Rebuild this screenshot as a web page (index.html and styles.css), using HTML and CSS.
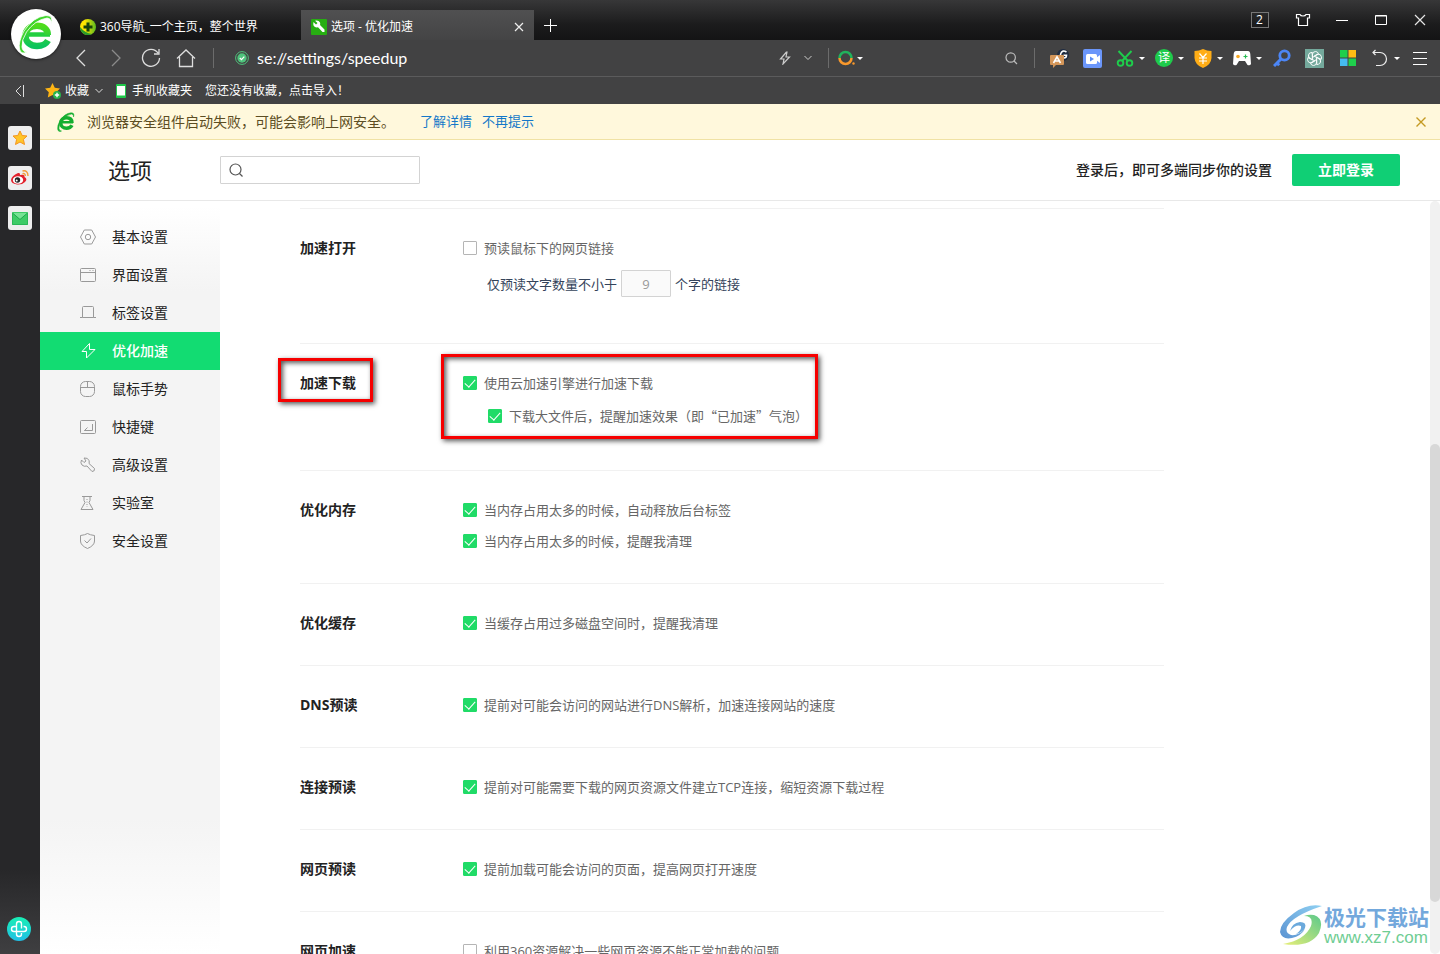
FILE: index.html
```html
<!DOCTYPE html>
<html lang="zh-CN">
<head>
<meta charset="utf-8">
<title>选项 - 优化加速</title>
<link rel="stylesheet" href="styles.css">
</head>
<body>
<div class="browser">
  <header class="chrome">
    <div class="logo">
      <svg width="36" height="40" viewBox="0 0 36 40" fill="none">
        <defs><linearGradient id="eg" x1="0" y1="0" x2="0" y2="1"><stop offset="0" stop-color="#4fdc1c"/><stop offset="1" stop-color="#0cc45c"/></linearGradient></defs>
        <path d="M8 20.500H32" stroke="#22cf40" stroke-width="4.500"/>
        <path d="M29.800 21C30 15 25.500 11.800 19 11.800C12 11.800 7.500 16 7.500 22C7.500 28 12.500 32 19 32C24.500 32 28 30 30 26.500" stroke="url(#eg)" stroke-width="6.500"/>
        <path d="M33 10Q34 4.500 29 4Q17 6 8.500 18Q3.500 26 4 33Q4.500 38 9 38Q3 41 1.500 35Q0 28 6 17Q15 3 28 1.500Q36 1.500 33 10Z" fill="#3fd52c" stroke="#fff" stroke-width=".8"/>
      </svg>
    </div>
    <div class="tabs">
      <a class="tab" href="#nav">
        <svg width="16" height="16" viewBox="0 0 16 16"><defs><linearGradient id="yg"><stop offset=".3" stop-color="#ffe600"/><stop offset="1" stop-color="#58b820"/></linearGradient></defs><circle cx="8" cy="8" r="8" fill="url(#yg)"/><path d="M0 8A8 8 0 0 0 12 15Q5 14 0 8Z" fill="#2b9d2a"/><path d="M8 3.500V12.500M3.500 8H12.500" stroke="#17410c" stroke-width="3"/></svg>
        <span>360导航_一个主页，整个世界</span>
      </a>
      <div class="tab tab-active">
        <svg width="16" height="16" viewBox="0 0 16 16"><rect width="16" height="16" rx="1" fill="#27ae12"/><path d="M2.500 3L5 5.500L6.500 4L4 1.700Q7.500 .7 9 3.500Q9.500 5 9 6L13.500 10.500V13H11.500L7 8.300Q4 9 2.500 6.500Q2 5 2.500 3Z" fill="#fff"/></svg>
        <span class="tab-text">选项 - 优化加速</span>
        <button class="tab-close" aria-label="关闭标签"><svg width="10" height="10" viewBox="0 0 10 10" fill="none" stroke="#eee" stroke-width="1.200"><path d="M1 1L9 9M9 1L1 9"/></svg></button>
      </div>
      <button class="tab-new" aria-label="新建标签"><svg width="14" height="14" viewBox="0 0 14 14" stroke="#fff"><path d="M7.500 1V14M1 7.500H14"/></svg></button>
      <div class="window-controls">
        <button class="count-btn"><span class="count">2</span></button>
        <button aria-label="皮肤"><svg width="16" height="14" viewBox="0 0 16 14" fill="none" stroke="#fff" stroke-width="1.200"><path d="M1.500 1.500H5Q5.500 3 8 3T11 1.500H14.500V5H12.500V12.500H3.500V5H1.500Z"/></svg></button>
        <button aria-label="最小化"><svg width="12" height="12" viewBox="0 0 12 12" stroke="#fff"><path d="M0 6.500H12"/></svg></button>
        <button aria-label="最大化"><svg width="12" height="12" viewBox="0 0 12 12" fill="none" stroke="#fff"><path d="M.5 1.500H11.500V10.500H.5ZM.5 2H11.500"/></svg></button>
        <button aria-label="关闭"><svg width="12" height="12" viewBox="0 0 12 12" stroke="#e5e5e5" stroke-width="1.200"><path d="M1 1L11 11M11 1L1 11"/></svg></button>
      </div>
    </div>
    <div class="toolbar">
      <nav class="nav-buttons">
        <button aria-label="后退"><svg width="12" height="18" viewBox="0 0 12 18" fill="none" stroke="#ddd" stroke-width="1.300"><path d="M10 1L2 9L10 17"/></svg></button>
        <button aria-label="前进"><svg width="12" height="18" viewBox="0 0 12 18" fill="none" stroke="#8b8b8b" stroke-width="1.300"><path d="M2 1L10 9L2 17"/></svg></button>
        <button aria-label="刷新"><svg width="20" height="20" viewBox="0 0 20 20" fill="none" stroke="#ddd" stroke-width="1.300"><path d="M17 5A8.500 8.500 0 1 0 18.500 10M18 1V6H13"/></svg></button>
        <button aria-label="主页"><svg width="20" height="20" viewBox="0 0 20 20" fill="none" stroke="#ddd" stroke-width="1.300"><path d="M1 10.500L10 2L19 10.500M3.500 9V18.500H16.500V9"/></svg></button>
      </nav>
      <div class="address">
        <svg width="14" height="14" viewBox="0 0 14 14" fill="none"><circle cx="7" cy="7" r="6.400" stroke="#4fc37c"/><circle cx="7" cy="7" r="4.700" fill="#4fc37c"/><path d="M4.800 7L6.500 8.600L9.300 5.600" stroke="#fff" stroke-width="1.200"/></svg>
        <input class="url" aria-label="地址" value="se://settings/speedup">
        <button aria-label="极速模式"><svg width="12" height="14" viewBox="0 0 12 14" fill="none" stroke="#ccc" stroke-width="1.200"><path d="M7.500 1L1.500 8H5L4 13L10.500 6H7L8 1Z"/></svg></button>
        <button aria-label="展开地址"><svg width="8" height="6" viewBox="0 0 8 6" fill="none" stroke="#ccc"><path d="M.5 1L4 4.500L7.500 1"/></svg></button>
      </div>
      <div class="search">
        <button class="engine" aria-label="搜索引擎"><svg width="17" height="16" viewBox="0 0 17 16" fill="none" stroke-width="2.500"><path d="M1.500 8A6 6 0 0 1 13.500 8" stroke="#20b15c"/><path d="M1.500 8A6 6 0 0 0 13.500 8" stroke="#f8982c"/><circle cx="15.500" cy="13.500" r="1.200" fill="#f8982c"/></svg><i class="caret"></i></button>
        <input class="search-input" aria-label="搜索">
        <button aria-label="搜索按钮"><svg width="13" height="13" viewBox="0 0 13 13" fill="none" stroke="#bbb" stroke-width="1.200"><circle cx="5.700" cy="5.500" r="4.700"/><path d="M9 9L12 12"/></svg></button>
      </div>
      <div class="tools">
        <button aria-label="翻译助手"><svg width="19" height="19" viewBox="0 0 19 19"><circle cx="13" cy="6" r="6" fill="#1f2c42"/><path d="M16.500 3Q12.500 .5 10.800 4.500T14 9Q16.500 9 16.500 6.200H13.500" fill="none" stroke="#fff" stroke-width="1.600"/><path d="M1 6H13Q14 6 14 7V15Q14 16 13 16H6L3 19V16H1Q0 16 0 15V7Q0 6 1 6Z" fill="#d49659"/><path d="M3.500 14L7 7.800L10.500 14M5 12H9" fill="none" stroke="#fff" stroke-width="1.600"/></svg></button>
        <button aria-label="录屏"><svg width="19" height="19" viewBox="0 0 19 19"><rect width="19" height="19" rx="2" fill="#6b96fa"/><rect x="3" y="5" width="11" height="10" rx="1.500" fill="#fff"/><path d="M13 9L17 6V14L13 11Z" fill="#fff"/><path d="M7 7.500L11 10L7 12.500Z" fill="#5b8ef5"/></svg></button>
        <button class="drop" aria-label="截图"><svg width="18" height="18" viewBox="0 0 18 18" fill="none" stroke="#1ecd4c" stroke-width="1.900"><circle cx="4.500" cy="14" r="2.800"/><circle cx="13.500" cy="14" r="2.800"/><path d="M2.500 2L11.500 11.500M15.500 2L6.500 11.500"/></svg><i class="caret"></i></button>
        <button class="drop" aria-label="翻译"><span class="translate">译</span><i class="caret"></i></button>
        <button class="drop" aria-label="网银"><svg width="18" height="19" viewBox="0 0 18 19"><path d="M9 0Q13 2 17.500 2V9Q17 16 9 19Q1 16 .5 9V2Q5 2 9 0Z" fill="#ffad16"/><path d="M5.500 4.500L9 8.500L12.500 4.500M5 9H13M5 12H13M9 8.500V15" fill="none" stroke="#fff" stroke-width="1.200"/></svg><i class="caret"></i></button>
        <button class="drop" aria-label="游戏"><svg width="18" height="16" viewBox="0 0 18 16"><path d="M3 1H15Q17 1 17.300 4L18 14Q17 16 14.500 15L12 11H6L3.500 15Q1 16 0 14L.7 4Q1 1 3 1Z" fill="#fff"/><circle cx="5" cy="6.500" r="1.800" fill="#f7a823"/><path d="M12.500 4.500V8.500M10.500 6.500H14.500" stroke="#28bc53" stroke-width="1.200"/></svg><i class="caret"></i></button>
        <button aria-label="密码"><svg width="18" height="18" viewBox="0 0 18 18" fill="none" stroke="#4c86f6"><circle cx="11.500" cy="6.500" r="4.700" stroke-width="2.800"/><path d="M8 10L1 17M4 14L6.200 16.200" stroke-width="3"/></svg></button>
        <button aria-label="智能助手"><svg width="19" height="19" viewBox="0 0 19 19" fill="none"><rect width="19" height="19" fill="#74a99c"/><g stroke="#fff" stroke-width=".9"><path id="petal" d="M7.500 10.500V5Q8 2.500 10.500 2.500Q12.500 2.500 13.500 4.500L9 7.200"/><use href="#petal" transform="rotate(60 9.500 9.500)"/><use href="#petal" transform="rotate(120 9.500 9.500)"/><use href="#petal" transform="rotate(180 9.500 9.500)"/><use href="#petal" transform="rotate(240 9.500 9.500)"/><use href="#petal" transform="rotate(300 9.500 9.500)"/></g></svg></button>
        <button aria-label="应用"><svg width="16" height="16" viewBox="0 0 16 16"><rect width="7.500" height="7.500" fill="#1fcf4c"/><rect x="8.500" width="7.500" height="7.500" fill="#ffbd14"/><rect y="8.500" width="7.500" height="7.500" fill="#45bbf0"/><rect x="8.500" y="8.500" width="7.500" height="7.500" fill="#1fcf4c"/></svg></button>
        <button class="drop" aria-label="恢复"><svg width="18" height="18" viewBox="0 0 18 18" fill="none" stroke="#eee" stroke-width="1.200"><path d="M2 3.500H9A6.500 6.500 0 0 1 9 16.500H5M4.500 1L2 3.500L4.500 6"/></svg><i class="caret"></i></button>
        <button aria-label="菜单"><svg width="14" height="14" viewBox="0 0 14 14" stroke="#fff"><path d="M0 1.500H14M0 7.500H14M0 13.500H14"/></svg></button>
      </div>
    </div>
    <div class="bookmarks">
      <button class="bm-collapse" aria-label="收起"><svg width="10" height="12" viewBox="0 0 10 12" fill="none" stroke="#ddd"><path d="M6 1L1 6L6 11M8.500 0V12"/></svg></button>
      <button class="bm-fav"><svg width="16" height="16" viewBox="0 0 16 16"><path d="M7.500 0L9.800 4.800L15 5.400L11.200 9.200L12.200 14.500L7.500 12L2.800 14.500L3.800 9.200L0 5.400L5.200 4.800Z" fill="#fdb515"/><circle cx="12" cy="12" r="4" fill="#27b24b"/><path d="M12 9.800V14.200M9.800 12H14.200" stroke="#fff" stroke-width="1.400"/></svg>收藏<svg class="chev" width="8" height="6" viewBox="0 0 8 6" fill="none" stroke="#ddd"><path d="M.5 1L4 4.500L7.500 1"/></svg></button>
      <a href="#mobile"><svg width="10" height="14" viewBox="0 0 10 14"><rect width="10" height="14" rx="1" fill="#20c94a"/><rect x="1" y="2" width="8" height="9.500" fill="#fff"/></svg>手机收藏夹</a>
      <a href="#import">您还没有收藏，点击导入！</a>
    </div>
  </header>

  <div class="body">
    <aside class="rail">
      <button class="rail-box" aria-label="收藏夹"><svg width="16" height="16" viewBox="0 0 16 16"><path d="M8 1L10.200 5.500L15 6L11.400 9.400L12.500 14.500L8 12L3.500 14.500L4.600 9.400L1 6L5.800 5.500Z" fill="#ffc529" stroke="#f5941f"/></svg></button>
      <button class="rail-box" aria-label="微博"><svg width="20" height="18" viewBox="0 0 20 18" fill="none"><path d="M8 4Q10.500 3.500 10 6Q15 5 14.500 8Q18 10 15 13Q12 16 7 15.500Q1 14.500 1 11Q1.500 7 8 4Z" fill="#e2222c"/><ellipse cx="8" cy="11" rx="5.200" ry="3.800" fill="#fff"/><circle cx="7.500" cy="11" r="2.700" fill="#222"/><circle cx="6.700" cy="11.600" r="1" fill="#fff"/><path d="M12.500 2Q18 .8 18 7M12.500 4.700Q15.500 4 15.300 7" stroke="#f29b38" stroke-width="1.400"/></svg></button>
      <button class="rail-box" aria-label="邮箱"><svg width="16" height="13" viewBox="0 0 16 13"><rect width="16" height="13" rx="1" fill="#3ecb67"/><path d="M.5 1L8 7.500L15.500 1" fill="#76e294" stroke="#1ca84b"/><path d="M.5 1V12.500H15.500V1" fill="none" stroke="#2bb757"/></svg></button>
      <button class="rail-health" aria-label="健康"><svg width="24" height="24" viewBox="0 0 24 24" fill="none"><defs><linearGradient id="hg" x1="0" y1="0" x2="0" y2="1"><stop offset="0" stop-color="#19efb4"/><stop offset="1" stop-color="#20bfe6"/></linearGradient></defs><circle cx="12" cy="12" r="12" fill="url(#hg)"/><path d="M14.500 11.500V7A2.500 2.500 0 0 0 9.500 7V17A2.500 2.500 0 0 0 14.500 17V16M9.500 9.500H7A2.500 2.500 0 0 0 7 14.500H17A2.500 2.500 0 0 0 17 9.500H16.500" stroke="#fff" stroke-width="1.400"/></svg></button>
    </aside>

    <div class="page">
      <div class="notice">
        <svg width="18" height="20" viewBox="0 0 36 40" fill="none"><path d="M8 20.500H32" stroke="#14ae30" stroke-width="5"/><path d="M30 22C30 15 25.500 11.500 19 11.500C12 11.500 7.500 16 7.500 22C7.500 28 12.500 32.500 19 32.500C24.500 32.500 28 30 30 26.500" stroke="#14ae30" stroke-width="7"/><path d="M33 10Q34 4.500 29 4Q17 6 8.500 18Q3.500 26 4 33Q4.500 38 9 38Q3 41 1.500 35Q0 28 6 17Q15 3 28 1.500Q36 1.500 33 10Z" fill="#14ae30" stroke="#14ae30"/></svg>
        <span class="notice-text">浏览器安全组件启动失败，可能会影响上网安全。</span>
        <a href="#detail">了解详情</a>
        <a href="#dismiss">不再提示</a>
        <button class="notice-close" aria-label="关闭提示"><svg width="10" height="10" viewBox="0 0 10 10" stroke="#c49a22" stroke-width="1.400"><path d="M.5 .5L9.500 9.500M9.500 .5L.5 9.500"/></svg></button>
      </div>
      <div class="page-head">
        <h1>选项</h1>
        <label class="find"><svg width="14" height="14" viewBox="0 0 14 14" fill="none" stroke="#555" stroke-width="1.200"><circle cx="6.500" cy="6.500" r="5.500"/><path d="M10.500 10.500L13.500 13.500"/></svg><input aria-label="搜索设置"></label>
        <span class="login-tip">登录后，即可多端同步你的设置</span>
        <button class="login">立即登录</button>
      </div>
      <div class="columns">
        <nav class="menu">
          <a href="#basic"><svg viewBox="0 0 16 16"><path d="M4.300 1H11.700L15.500 8L11.700 15H4.300L.5 8Z"/><circle cx="8" cy="8" r="2.700"/></svg>基本设置</a>
          <a href="#ui"><svg viewBox="0 0 16 16"><rect x=".5" y="1.500" width="15" height="13" rx="1"/><path d="M.5 5.500H15.500M9.500 3.500H10.500M12.500 3.500H13.500"/></svg>界面设置</a>
          <a href="#tabs"><svg viewBox="0 0 16 16"><path d="M0 12.500H2.500V2.500Q2.500 1.500 3.500 1.500H12.500Q13.500 1.500 13.500 2.500V12.500H16M2.500 12.500H13.500"/></svg>标签设置</a>
          <a class="current" href="#speed"><svg viewBox="0 0 16 16"><path d="M9.500 .5L2 8.500H6.500V15L15 6.500H9.500Z"/></svg>优化加速</a>
          <a href="#mouse"><svg viewBox="0 0 16 16"><rect x=".5" y=".5" width="14" height="15" rx="5"/><path d="M.5 6.500H14.500M7.500 .5V6.500"/></svg>鼠标手势</a>
          <a href="#keys"><svg viewBox="0 0 16 16"><rect x=".5" y="1.500" width="15" height="13" rx="1"/><path d="M12.500 5V11.500H4.500L7.500 8.500M4.500 11.500H7.500"/></svg>快捷键</a>
          <a href="#advanced"><svg viewBox="0 0 16 16"><path d="M1.500 3L4 5.500L6 4L4 1Q8 .5 9 3.500Q9.500 5 9 6.500L14.500 11.500Q15 14.500 12 14.500L7 9Q4 10 2 8Q0 6 1.500 3Z"/></svg>高级设置</a>
          <a href="#lab"><svg viewBox="0 0 16 16"><path d="M2 1.500H12M4 1.500V5.500L5 7.500L1 14.500H13L9 7.500L10 5.500V1.500"/><path d="M7 4V12" stroke-dasharray="1 1.500"/></svg>实验室</a>
          <a href="#security"><svg viewBox="0 0 16 16"><path d="M7.500 .5Q10 2 14.500 2.500V8Q14.500 12.500 7.500 15.500Q.5 12.500 .5 8V2.500Q5 2 7.500 .5ZM4.500 7.500L7 10L11 5.500"/></svg>安全设置</a>
        </nav>
        <main class="settings">
          <section class="row row-open">
            <h2>加速打开</h2>
            <div class="options">
              <label class="option"><input type="checkbox">预读鼠标下的网页链接</label>
              <label class="amount">仅预读文字数量不小于<input type="text" value="9">个字的链接</label>
            </div>
          </section>
          <section class="row row-download">
            <h2>加速下载</h2>
            <div class="options">
              <label class="option"><input type="checkbox" checked>使用云加速引擎进行加速下载</label>
              <label class="option nested"><input type="checkbox" checked>下载大文件后，提醒加速效果（即“已加速”气泡）</label>
            </div>
            <div class="mark mark-title"></div>
            <div class="mark mark-options"></div>
          </section>
          <section class="row">
            <h2>优化内存</h2>
            <div class="options">
              <label class="option"><input type="checkbox" checked>当内存占用太多的时候，自动释放后台标签</label>
              <label class="option"><input type="checkbox" checked>当内存占用太多的时候，提醒我清理</label>
            </div>
          </section>
          <section class="row">
            <h2>优化缓存</h2>
            <div class="options"><label class="option"><input type="checkbox" checked>当缓存占用过多磁盘空间时，提醒我清理</label></div>
          </section>
          <section class="row">
            <h2>DNS预读</h2>
            <div class="options"><label class="option"><input type="checkbox" checked>提前对可能会访问的网站进行DNS解析，加速连接网站的速度</label></div>
          </section>
          <section class="row">
            <h2>连接预读</h2>
            <div class="options"><label class="option"><input type="checkbox" checked>提前对可能需要下载的网页资源文件建立TCP连接，缩短资源下载过程</label></div>
          </section>
          <section class="row">
            <h2>网页预读</h2>
            <div class="options"><label class="option"><input type="checkbox" checked>提前加载可能会访问的页面，提高网页打开速度</label></div>
          </section>
          <section class="row">
            <h2>网页加速</h2>
            <div class="options"><label class="option"><input type="checkbox">利用360资源解决一些网页资源不能正常加载的问题</label></div>
          </section>
        </main>
        <div class="scrollbar"><div class="thumb"></div></div>
      </div>
    </div>
  </div>
  <div class="watermark">
    <svg width="44" height="42" viewBox="0 0 44 42"><defs><linearGradient id="wb" x1="1" y1="0" x2="0" y2="1"><stop offset="0" stop-color="#8fd0f2"/><stop offset="1" stop-color="#5b93d2"/></linearGradient><linearGradient id="wg" x1="0" y1="1" x2="1" y2="0"><stop offset="0" stop-color="#e8ee78"/><stop offset="1" stop-color="#5cc98a"/></linearGradient></defs><path d="M42 2Q28 -1 14 9Q0 19 0 28Q2 36 12 34Q21 32 25 25Q18 32 11 31Q5 29 7 23Q12 12 42 2Z" fill="url(#wb)"/><path d="M10 27Q12 19 20 18Q27 18 25 24Q23 28 16 30Q22 26 21 22Q16 20 10 27Z" fill="#6ba9dc"/><path d="M24 12Q34 12 31 22Q25 36 3 40Q30 44 39 29Q45 15 34 11Q29 10 24 12Z" fill="url(#wg)"/></svg>
    <div class="watermark-text"><span class="wm-name">极光下载站</span><span class="wm-url">www.xz7.com</span></div>
  </div>
</div>
</body>
</html>
```

FILE: styles.css
```css
* { box-sizing: border-box; }
body { margin: 0; background: #fff; color: #222; font: 13px/20px "Open Sans", "Noto Sans CJK SC", sans-serif; }
button, input { font: inherit; color: inherit; }
button { border: 0; padding: 0; background: none; display: flex; align-items: center; justify-content: center; }
input { border: 0; padding: 0; background: none; min-width: 0; outline: 0; }
a { color: inherit; text-decoration: none; }
svg { flex: none; display: block; }
h1, h2 { margin: 0; }

.browser { position: relative; height: 100vh; display: flex; flex-direction: column; overflow: hidden; }
.chrome { flex: none; position: relative; color: #fff; background: #424243; font-size: 12px; }
.logo { position: absolute; left: 11px; top: 9px; width: 50px; height: 50px; border-radius: 50%; background: #fff; display: flex; align-items: center; justify-content: center; box-shadow: 0 1px 3px #0008; z-index: 1; }

.tabs { height: 40px; padding-left: 70px; display: flex; align-items: flex-end; background: linear-gradient(#373738, #1c1c1d 60%, #141415); }
.tab { width: 231px; height: 30px; padding: 3px 10px 0; display: flex; align-items: center; gap: 4px; }
.tab-active { width: 233px; background: linear-gradient(#505051, #444445); }
.tab-text { flex: 1; }
.tab-close { width: 10px; height: 20px; }
.tab-new { width: 32px; height: 30px; }
.window-controls { display: flex; margin-left: auto; padding-right: 1px; align-self: stretch; }
.window-controls button { width: 39px; }
.window-controls .count-btn { width: 47px; }
.count { width: 18px; height: 16px; border: 1px solid #777; line-height: 14px; }

.toolbar { height: 36px; display: flex; align-items: center; }
.nav-buttons { display: flex; padding-left: 63px; margin-right: 10px; }
.nav-buttons button { width: 35px; height: 30px; }
.address { flex: 1; display: flex; align-items: center; height: 20px; border-left: 1px solid #6c6c6c; padding: 0 9px 0 21px; }
.url { flex: 1; margin: 0 8px; font: 16px/20px Lato, sans-serif; }
.address button { width: 23px; height: 20px; }
.search { width: 207px; height: 20px; display: flex; align-items: center; border: solid #6c6c6c; border-width: 0 1px; padding: 0 16px 0 9px; }
.search-input { flex: 1; }
.engine { gap: 2px; }
.tools { display: flex; padding: 0 4px 0 8px; }
.tools button { width: 33px; height: 30px; }
.tools .drop { width: 39px; gap: 5px; padding-left: 4px; }
.caret { border: solid transparent; border-width: 3px 3px 0; border-top-color: #fff; }
.translate { width: 18px; height: 18px; border-radius: 50%; background: #1fcb4c; line-height: 17px; font-size: 12px; text-align: center; }

.bookmarks { height: 28px; border-top: 1px solid #5b5b5c; display: flex; align-items: center; gap: 13px; padding-left: 15px; }
.bookmarks a { display: flex; align-items: center; gap: 6px; }
.bm-collapse { width: 10px; margin-right: 7px; }
.bm-fav { gap: 4px; }
.chev { margin-left: 2px; }

.body { flex: 1; min-height: 0; display: flex; }
.rail { flex: none; width: 40px; padding: 22px 0 13px; display: flex; flex-direction: column; align-items: center; gap: 16px; background: linear-gradient(#272729 90%, #3f3f41); }
.rail-box { width: 24px; height: 24px; border-radius: 3px; background: #eee; }
.rail-health { margin: auto 2px 0 0; }
.page { flex: 1; min-width: 0; display: flex; flex-direction: column; }

.notice { flex: none; height: 36px; display: flex; align-items: center; gap: 10px; padding: 0 14px 0 17px; background: #fff8dc; border-bottom: 1px solid #f0e2a4; color: #5c4d22; }
.notice a { color: #1478c9; padding-bottom: 2px; }
.notice-text { font-size: 14px; margin: 0 15px 0 2px; }
.notice-close { margin-left: auto; }

.page-head { flex: none; height: 61px; display: flex; align-items: center; padding: 0 40px 0 68px; border-bottom: 1px solid #e8e8e8; }
.page-head h1 { width: 112px; font-size: 22px; font-weight: 400; }
.find { width: 200px; height: 28px; display: flex; align-items: center; gap: 8px; padding: 0 8px; border: 1px solid #d3d3d3; border-radius: 1px; }
.find input { flex: 1; }
.login-tip { margin: 0 20px 0 auto; font-size: 14px; font-weight: 500; }
.login { width: 108px; height: 32px; border-radius: 2px; background: #10cf75; color: #fff; font-size: 14px; font-weight: 700; }

.columns { flex: 1; min-height: 0; display: flex; overflow: hidden; }
.menu { flex: none; width: 180px; padding-top: 17px; background: linear-gradient(#fff 5px, #f4f4f4 90px, #f4f4f4 82%, #fff); }
.menu a { height: 38px; padding-left: 40px; display: flex; align-items: center; gap: 16px; font-size: 14px; }
.menu svg { width: 16px; height: 16px; fill: none; stroke: #999; }
.menu .current { background: #12dc72; color: #fff; font-weight: 500; }
.menu .current svg { stroke: #fff; }

.settings { flex: 1; min-width: 0; padding: 7px 266px 0 80px; }
.row { position: relative; display: grid; grid-template-columns: 163px 1fr; padding: 29px 0 32px; border-top: 1px solid #f1f1f1; }
.row h2 { font-size: 14px; line-height: 20px; font-weight: 700; }
.options { display: flex; flex-direction: column; align-items: flex-start; gap: 11px; color: #666; }
.option { display: flex; align-items: center; gap: 7px; white-space: nowrap; }
.option input { appearance: none; width: 14px; height: 14px; margin: 0; border: 1px solid #b5b5b5; border-radius: 1px; display: grid; justify-items: center; }
.option input:checked { background: #20db67; border-color: #20db67; }
.option input:checked::after { content: ""; width: 5px; height: 9px; border: solid #fff; border-width: 0 1px 1px 0; transform: rotate(42deg); }
.nested { margin-left: 25px; font-family: "Noto Sans CJK SC", sans-serif; }
.row-open { padding-bottom: 46px; }
.row-open .options { gap: 12px; }
.amount { margin-left: 24px; display: flex; align-items: center; gap: 4px; color: #34435a; }
.amount input { width: 50px; height: 27px; border: 1px solid #d3d3d3; border-radius: 1px; background: #fafafa; color: #999; text-align: center; }
.row-download { padding-bottom: 44px; }
.row-download .options { gap: 13px; }
.mark { position: absolute; border: 3px solid #f60000; box-shadow: 2px 2px 5px #000a, inset 2px 2px 5px #000a; pointer-events: none; }
.mark-title { left: -22px; top: 14px; width: 95px; height: 44px; }
.mark-options { left: 141px; top: 10px; width: 377px; height: 85px; }

.scrollbar { flex: none; width: 10px; background: #f1f1f1; border-radius: 5px; display: grid; grid-template-rows: 243fr 458fr 52fr; }
.thumb { grid-row: 2; background: #d8d8d8; border-radius: 5px; }

.watermark { position: absolute; right: 11px; bottom: 8px; display: flex; align-items: flex-end; }
.watermark-text { display: flex; flex-direction: column; }
.wm-name { font-size: 21px; line-height: 26px; font-weight: 700; color: #73a8dc; }
.wm-url { font: 17px/16px "Liberation Sans", sans-serif; color: #6fcd93; }
```
